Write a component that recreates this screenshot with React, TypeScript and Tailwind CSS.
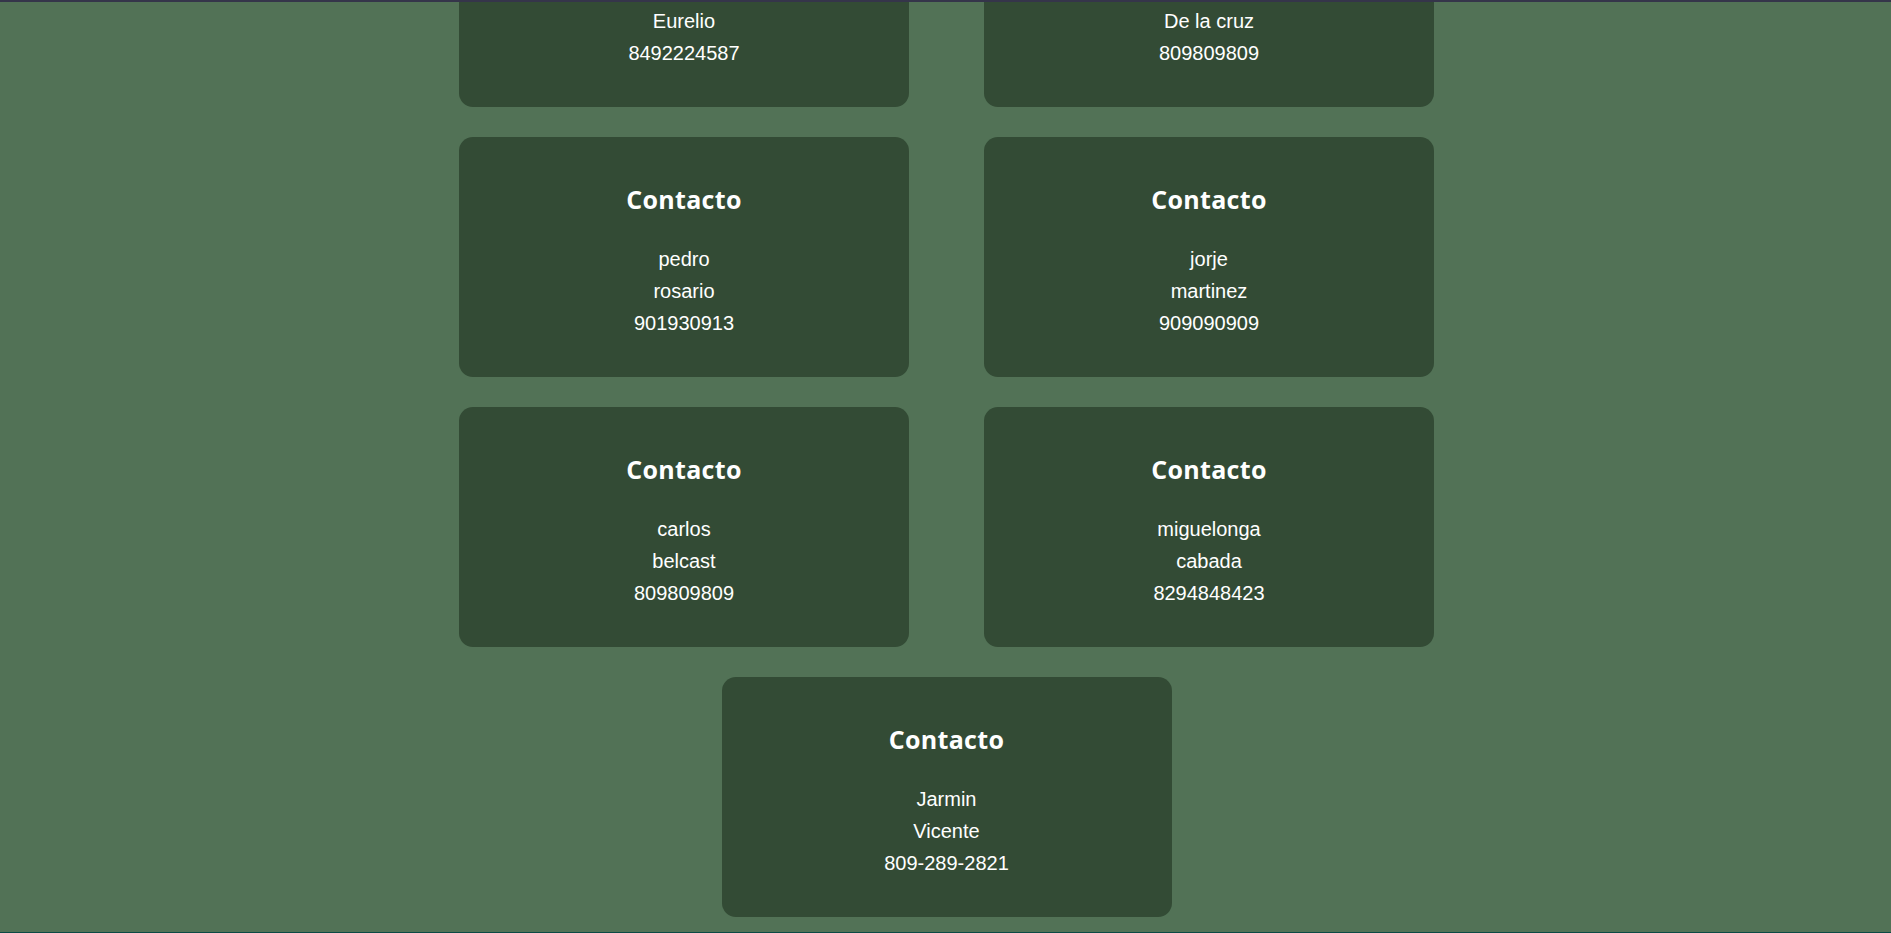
import React from "react"

type Contact = { first: string; last: string; phone: string }

const contacts: Contact[] = [
  { first: "Luis", last: "Eurelio", phone: "8492224587" },
  { first: "Juan", last: "De la cruz", phone: "809809809" },
  { first: "pedro", last: "rosario", phone: "901930913" },
  { first: "jorje", last: "martinez", phone: "909090909" },
  { first: "carlos", last: "belcast", phone: "809809809" },
  { first: "miguelonga", last: "cabada", phone: "8294848423" },
  { first: "Jarmin", last: "Vicente", phone: "809-289-2821" },
]

function ContactCard({ c, wide }: { c: Contact; wide?: boolean }) {
  return (
    <div
      className={`h-[240px] w-[450px] rounded-[14px] bg-[#334b35] flex flex-col items-center pt-[46px] text-white ${
        wide ? "col-span-2 justify-self-center" : ""
      }`}
    >
      <h2 className="text-[25px] leading-[32px] font-bold font-['Open_Sans',sans-serif] tracking-[0.3px]">
        Contacto
      </h2>
      <div className="mt-[28px] flex flex-col items-center text-[20px] leading-[32px] font-['Liberation_Sans',Arial,sans-serif]">
        <p>{c.first}</p>
        <p>{c.last}</p>
        <p>{c.phone}</p>
      </div>
    </div>
  )
}

export default function App() {
  return (
    <div className="relative h-screen overflow-hidden bg-[#527256]">
      {/* header edge */}
      <div className="absolute top-0 left-0 right-0 h-[2px] bg-[#35354a] z-10" />

      <div className="-mt-[133px] flex flex-col items-center">
        <div className="grid grid-cols-[450px_450px] gap-x-[75px] gap-y-[30px] pb-[15px] translate-x-[1px]">
          {contacts.map((c, i) => (
            <ContactCard key={i} c={c} wide={i === contacts.length - 1} />
          ))}
        </div>
        <footer className="w-full h-[40px] bg-[#0b4a45]" />
      </div>
    </div>
  )
}
